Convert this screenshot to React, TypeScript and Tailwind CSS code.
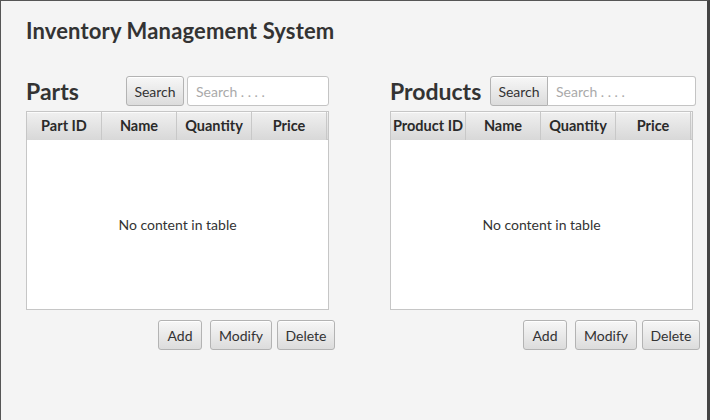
import React from 'react';

const font = { fontFamily: 'Lato, "Liberation Sans", sans-serif' };

const btn =
  'h-[30px] rounded-[3px] border border-[#b3b3b3] bg-gradient-to-b from-[#f7f7f7] to-[#dcdcdc] text-[14px] text-[#333] shadow-[inset_0_1px_0_#ffffff]';

interface PanelProps {
  title: string;
  idLabel: string;
  joined?: boolean;
  width: string;
}

function Panel({ title, idLabel, joined, width }: PanelProps) {
  return (
    <div className={`flex flex-col ${width}`}>
      <div className="flex h-[30px] items-center">
        <div className="w-[100px] text-[23px] font-bold leading-[30px] text-[#333]">{title}</div>
        <button className={`${btn} w-[58px] ${joined ? 'rounded-r-none' : ''}`}>Search</button>
        <input
          placeholder="Search . . . ."
          className={`h-[30px] rounded-[3px] border border-[#c4c4c4] bg-white px-[8px] text-[14px] text-[#333] outline-none placeholder:text-[#aaa] ${
            joined ? 'ml-0 w-[148px] rounded-l-none border-l-0' : 'ml-[3px] w-[142px]'
          }`}
        />
      </div>
      <div className="mt-[5px] flex h-[199px] w-[303px] flex-col border border-[#c6c6c6] bg-white">
        <div className="flex h-[28px] bg-gradient-to-b from-[#f0f0f0] to-[#d8d8d8] shadow-[inset_0_1px_0_#fbfbfb]">
          {[idLabel, 'Name', 'Quantity', 'Price'].map((h) => (
            <div
              key={h}
              className="flex w-[75px] items-center justify-center whitespace-nowrap border-r border-[#c8c8c8] text-[14.5px] font-bold text-[#2a2a2a]"
            >
              {h}
            </div>
          ))}
          <div className="flex-1 border-b border-[#c8c8c8]" />
        </div>
        <div className="flex flex-1 items-center justify-center text-[14px] text-[#333]">No content in table</div>
      </div>
      <div className="mt-[10px] flex justify-end">
        <button className={`${btn} w-[44px]`}>Add</button>
        <button className={`${btn} ml-[8px] w-[62px]`}>Modify</button>
        <button className={`${btn} ml-[5px] w-[58px]`}>Delete</button>
      </div>
    </div>
  );
}

export default function App() {
  return (
    <div
      style={font}
      className="h-[420px] w-[710px] overflow-hidden border-l border-t border-r-[3px] border-l-[#555] border-t-[#555] border-r-[#444] bg-[#f4f4f4]"
    >
      <div className="pl-[25px] pt-[16px] text-[22px] font-bold leading-[28px] tracking-[0.15px] text-[#333]">
        Inventory Management System
      </div>
      <div className="mt-[31px] flex pl-[25px]">
        <Panel title="Parts" idLabel="Part ID" width="w-[309px]" />
        <div className="ml-[55px]">
          <Panel title="Products" idLabel="Product ID" joined width="w-[310px]" />
        </div>
      </div>
    </div>
  );
}
